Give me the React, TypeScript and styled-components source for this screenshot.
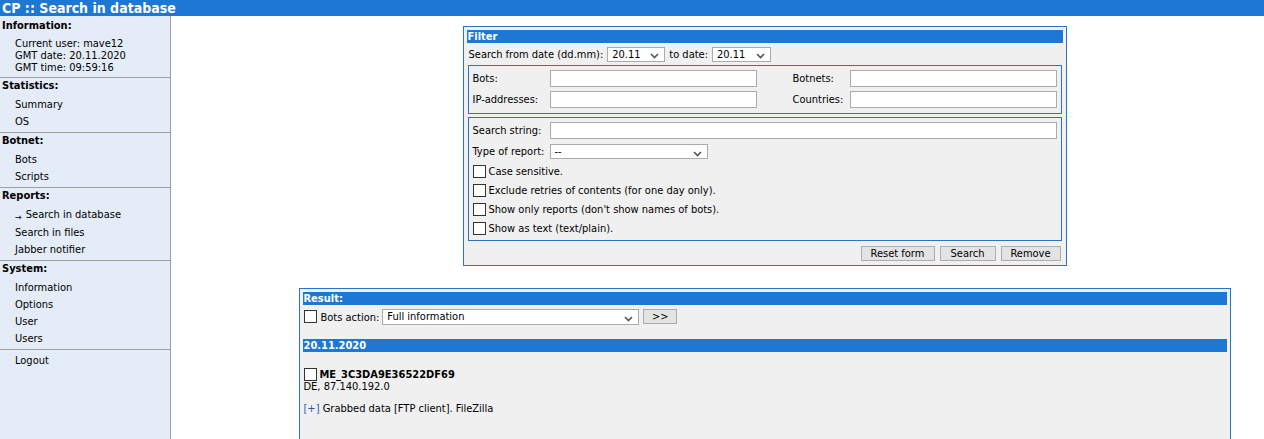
import React from "react";
import styled, { createGlobalStyle } from "styled-components";

const BLUE = "#1e78d3";
const BORDER_BLUE = "#2a73c6";

const GlobalStyle = createGlobalStyle`
  html, body { margin: 0; padding: 0; background: #fff; }
  body {
    font-family: "DejaVu Sans Condensed", Tahoma, "DejaVu Sans", sans-serif;
    font-size: 11px;
    color: #000;
  }
  * { box-sizing: border-box; }
`;

const Page = styled.div`
  display: flex;
  flex-direction: column;
  min-height: 439px;
  height: 439px;
  overflow: hidden;
`;

const TopBar = styled.div`
  height: 17px;
  background: ${BLUE};
  color: #fff;
  font-weight: bold;
  font-size: 14px;
  line-height: 16px;
  padding-left: 2px;
  white-space: nowrap;
`;

const Body = styled.div`
  display: flex;
  flex: 1;
`;

const Sidebar = styled.div`
  width: 171px;
  flex: none;
  background: #e4ecf7;
  border-right: 1px solid #9f9f9f;
`;

const Section = styled.div<{ $first?: boolean }>`
  padding-top: ${(p) => (p.$first ? 2 : 0)}px;
  border-bottom: 1px solid #9f9f9f;
  &:last-child { border-bottom: none; }
`;

const SectionTitle = styled.div`
  font-weight: bold;
  line-height: 16px;
  padding-left: 2px;
`;

const InfoList = styled.div`
  padding: 4px 0 3px 15px;
  line-height: 12px;
`;

const ItemList = styled.div`
  padding: 2px 0 2px 15px;
`;

const Item = styled.div`
  line-height: 17px;
  white-space: nowrap;
`;

const Arrow = styled.span`
  font-size: 9px;
  margin-right: 4px;
  position: relative;
  top: 2px;
`;

const Main = styled.div`
  flex: 1;
  display: flex;
  flex-direction: column;
  align-items: center;
  padding: 10px 0 0 94px;
  gap: 22px;
`;

const Panel = styled.div<{ $w: number }>`
  width: ${(p) => p.$w}px;
  background: #f0f0f0;
  border: 1px solid ${BORDER_BLUE};
  padding: 3px;
`;

const Bar = styled.div`
  height: 13px;
  background: ${BLUE};
  color: #fff;
  font-weight: bold;
  line-height: 13px;
  padding-left: 1px;
`;

const DateRow = styled.div`
  display: flex;
  align-items: center;
  gap: 4px;
  padding: 3px 2px 3px;
  height: 22px;
`;

const Fieldset = styled.div`
  margin: 0 1px;
  border: 1px solid ${BORDER_BLUE};
  padding: 4px 4px 5px;
  & + & { margin-top: 3px; }
`;

const PairGrid = styled.div`
  display: grid;
  grid-template-columns: 77px 207px 36px 57px 207px;
  row-gap: 4px;
  align-items: center;
`;

const TextInput = styled.div<{ $w?: number }>`
  width: ${(p) => (p.$w ? `${p.$w}px` : "100%")};
  height: 17px;
  background: #fff;
  border: 1px solid #ababab;
`;

const SelectBox = styled.div<{ $w: number; $h?: number }>`
  width: ${(p) => p.$w}px;
  height: ${(p) => p.$h ?? 15}px;
  background: #fff;
  border: 1px solid #ababab;
  display: flex;
  align-items: center;
  justify-content: space-between;
  padding: 0 5px 0 4px;
  line-height: 13px;
  flex: none;
`;

const Chevron = () => (
  <svg width="9" height="6" viewBox="0 0 9 6" style={{ marginTop: 4 }}>
    <path d="M1 1 L4.5 4.5 L8 1" fill="none" stroke="#555" strokeWidth="1.6" />
  </svg>
);

const Select = ({ w, h, value }: { w: number; h?: number; value: string }) => (
  <SelectBox $w={w} $h={h}>
    <span>{value}</span>
    <Chevron />
  </SelectBox>
);

const LabelRow = styled.div<{ $gap: number }>`
  display: grid;
  grid-template-columns: 77px 1fr;
  align-items: center;
  margin-top: ${(p) => p.$gap}px;
  &:first-child { margin-top: 0; }
`;

const CheckRow = styled.div<{ $gap: number }>`
  display: flex;
  align-items: flex-end;
  gap: 3px;
  margin-top: ${(p) => p.$gap}px;
  height: 13px;
  line-height: 12px;
  white-space: nowrap;
`;

const Box = styled.span`
  width: 13px;
  height: 13px;
  flex: none;
  background: #fff;
  border: 1px solid #333;
  display: inline-block;
`;

const ButtonRow = styled.div`
  display: flex;
  justify-content: flex-end;
  gap: 5px;
  padding: 5px 2px 1px;
`;

const Button = styled.div<{ $w: number }>`
  width: ${(p) => p.$w}px;
  height: 15px;
  background: #e3e3e3;
  border: 1px solid #adadad;
  text-align: center;
  line-height: 13px;
`;

const ActionRow = styled.div`
  display: flex;
  align-items: center;
  padding: 3px 0 0 1px;
  height: 20px;
`;

const ActionLabel = styled.span`
  margin: 0 3px 0 4px;
  position: relative;
  top: 1px;
`;

const GoButton = styled(Button)`
  margin-left: 4px;
`;

const DateBar = styled(Bar)`
  margin-top: 14px;
`;

const Entry = styled.div`
  padding: 16px 0 0 1px;
  line-height: 12px;
  min-height: 140px;
`;

const BotLine = styled.div`
  display: flex;
  align-items: flex-end;
  gap: 3px;
  height: 13px;
`;

const BotName = styled.span`
  font-weight: bold;
  line-height: 12px;
`;

const DataLine = styled.div`
  margin-top: 10px;
`;

const Plus = styled.span`
  color: #2a5db0;
`;

export default function App() {
  return (
    <>
      <GlobalStyle />
      <Page>
        <TopBar>CP :: Search in database</TopBar>
        <Body>
          <Sidebar>
            <Section $first>
              <SectionTitle>Information:</SectionTitle>
              <InfoList>
                <div>Current user: mave12</div>
                <div>GMT date: 20.11.2020</div>
                <div>GMT time: 09:59:16</div>
              </InfoList>
            </Section>
            <Section>
              <SectionTitle>Statistics:</SectionTitle>
              <ItemList>
                <Item>Summary</Item>
                <Item>OS</Item>
              </ItemList>
            </Section>
            <Section>
              <SectionTitle>Botnet:</SectionTitle>
              <ItemList>
                <Item>Bots</Item>
                <Item>Scripts</Item>
              </ItemList>
            </Section>
            <Section>
              <SectionTitle>Reports:</SectionTitle>
              <ItemList>
                <Item><Arrow>→</Arrow>Search in database</Item>
                <Item>Search in files</Item>
                <Item>Jabber notifier</Item>
              </ItemList>
            </Section>
            <Section>
              <SectionTitle>System:</SectionTitle>
              <ItemList>
                <Item>Information</Item>
                <Item>Options</Item>
                <Item>User</Item>
                <Item>Users</Item>
              </ItemList>
            </Section>
            <Section>
              <ItemList>
                <Item>Logout</Item>
              </ItemList>
            </Section>
          </Sidebar>
          <Main>
            <Panel $w={604}>
              <Bar>Filter</Bar>
              <DateRow>
                <span>Search from date (dd.mm):</span>
                <Select w={58} value="20.11" />
                <span>to date:</span>
                <Select w={59} value="20.11" />
              </DateRow>
              <Fieldset>
                <PairGrid>
                  <span>Bots:</span>
                  <TextInput />
                  <span />
                  <span>Botnets:</span>
                  <TextInput />
                  <span>IP-addresses:</span>
                  <TextInput />
                  <span />
                  <span>Countries:</span>
                  <TextInput />
                </PairGrid>
              </Fieldset>
              <Fieldset>
                <LabelRow $gap={0}>
                  <span>Search string:</span>
                  <TextInput />
                </LabelRow>
                <LabelRow $gap={5}>
                  <span>Type of report:</span>
                  <Select w={158} value="--" />
                </LabelRow>
                <CheckRow $gap={6}>
                  <Box />
                  <span>Case sensitive.</span>
                </CheckRow>
                <CheckRow $gap={6}>
                  <Box />
                  <span>Exclude retries of contents (for one day only).</span>
                </CheckRow>
                <CheckRow $gap={6}>
                  <Box />
                  <span>Show only reports (don't show names of bots).</span>
                </CheckRow>
                <CheckRow $gap={6}>
                  <Box />
                  <span>Show as text (text/plain).</span>
                </CheckRow>
              </Fieldset>
              <ButtonRow>
                <Button $w={74}>Reset form</Button>
                <Button $w={56}>Search</Button>
                <Button $w={60}>Remove</Button>
              </ButtonRow>
            </Panel>
            <Panel $w={932}>
              <Bar>Result:</Bar>
              <ActionRow>
                <Box />
                <ActionLabel>Bots action:</ActionLabel>
                <Select w={257} h={16} value="Full information" />
                <GoButton $w={34}>&gt;&gt;</GoButton>
              </ActionRow>
              <DateBar>20.11.2020</DateBar>
              <Entry>
                <BotLine>
                  <Box />
                  <BotName>ME_3C3DA9E36522DF69</BotName>
                </BotLine>
                <div>DE, 87.140.192.0</div>
                <DataLine>
                  <Plus>[+]</Plus> Grabbed data [FTP client]. FileZilla
                </DataLine>
              </Entry>
            </Panel>
          </Main>
        </Body>
      </Page>
    </>
  );
}
